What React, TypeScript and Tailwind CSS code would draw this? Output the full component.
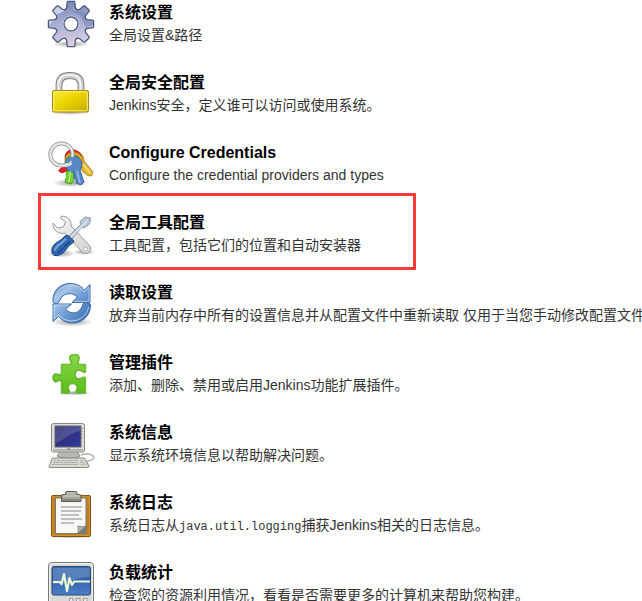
import type { ReactNode } from "react";

function gearPath() {
  const points: string[] = [];
  const add = (deg: number, r: number) => {
    const a = (deg * Math.PI) / 180;
    points.push(`${(24 + r * Math.sin(a)).toFixed(2)} ${(24 - r * Math.cos(a)).toFixed(2)}`);
  };
  for (let i = 0; i < 8; i++) {
    const c = i * 45;
    add(c - 15, 16.8);
    add(c - 10, 22);
    add(c - 8, 22.8);
    add(c + 8, 22.8);
    add(c + 10, 22);
    add(c + 15, 16.8);
    add(c + 22.5, 15.4);
  }
  return `M${points.join("L")}ZM24 17a7 7 0 1 0 0 14a7 7 0 1 0 0-14Z`;
}

function Icon({ children }: { children: ReactNode }) {
  return (
    <svg viewBox="0 0 48 48" className="size-12 shrink-0" aria-hidden="true">
      {children}
    </svg>
  );
}

function Shadow({ cx = 24, cy = 43, rx = 20, ry = 3 }: { cx?: number; cy?: number; rx?: number; ry?: number }) {
  return <ellipse cx={cx} cy={cy} rx={rx} ry={ry} fill="url(#shadow)" />;
}

function SharedGradients() {
  return (
    <svg className="absolute size-0" aria-hidden="true">
      <defs>
        <radialGradient id="shadow">
          <stop offset="0" stopColor="#000" stopOpacity=".4" />
          <stop offset="1" stopColor="#000" stopOpacity="0" />
        </radialGradient>
        <linearGradient id="metal" x1="0" y1="0" x2="1" y2="1">
          <stop offset="0" stopColor="#f4f4f3" />
          <stop offset="1" stopColor="#d3d5d1" />
        </linearGradient>
      </defs>
    </svg>
  );
}

function GearIcon() {
  const d = gearPath();
  return (
    <Icon>
      <defs>
        <linearGradient id="gear" x1="0" y1="0" x2="0.15" y2="1">
          <stop offset="0" stopColor="#7583b1" />
          <stop offset=".45" stopColor="#a0a9cf" />
          <stop offset="1" stopColor="#dccfe3" />
        </linearGradient>
        <clipPath id="gear-clip">
          <path d={d} clipRule="evenodd" />
        </clipPath>
      </defs>
      <Shadow cy={44} rx={19} ry={3.5} />
      <path d={d} fill="url(#gear)" fillRule="evenodd" />
      <g clipPath="url(#gear-clip)">
        <path d="M2 27C4 20 8 22 9 17C10 12 15 15 19 8L8 5L1 18Z" fill="#c9d3e6" />
        <path d="M25 12C34 9 40 9 47 24L39 28L33 15Z" fill="#7484b3" opacity=".55" />
      </g>
      <path d={d} fill="none" stroke="#4a5980" strokeWidth="1.3" strokeLinejoin="round" />
      <circle cx="24" cy="24" r="8.2" fill="none" stroke="#c5cde0" strokeWidth=".8" />
    </Icon>
  );
}

function LockIcon() {
  return (
    <Icon>
      <defs>
        <linearGradient id="lock" x1="0" y1="0" x2="1" y2="1">
          <stop offset="0" stopColor="#fbea3c" />
          <stop offset=".45" stopColor="#ecd400" />
          <stop offset="1" stopColor="#c4a900" />
        </linearGradient>
      </defs>
      <Shadow cx={23} cy={42} rx={21} />
      <path d="M12 23V15C12 8.500 16 5.500 23 5.500S34 8.500 34 15V23" fill="none" stroke="#7f827c" strokeWidth="6.800" />
      <path d="M12 23V15C12 8.500 16 5.500 23 5.500S34 8.500 34 15V23" fill="none" stroke="#cdcfca" strokeWidth="4.800" />
      <path d="M11.300 22V15C11.300 7.500 16 4.800 23 4.800S33.500 8.500 33.500 15V22" fill="none" stroke="#f2f2f0" strokeWidth="1.800" />
      <rect x="5.500" y="20.500" width="36" height="21.500" rx="1.500" fill="url(#lock)" stroke="#a58b14" />
      <rect x="6.700" y="21.700" width="33.600" height="19.100" rx="1" fill="none" stroke="#f8ee7c" strokeWidth="1" />
    </Icon>
  );
}

function KeysIcon() {
  return (
    <Icon>
      <Shadow cx={24} cy={43} rx={18} ry={4} />
      <g strokeWidth=".8" strokeLinejoin="round">
        <path d="M22 12C29 9 37 13 37 21L46 32L44.500 36L40.500 35.500L38 33L36 32L34 29L28 26Z" fill="#e2bb35" stroke="#a17d12" />
        <path d="M18 26L22 30L15 33L11.500 31L14 28Z" fill="#de2424" stroke="#a31a1a" />
        <path d="M18 18C18 10 25 8 30 11C34 13 35 17 35 20L20 26Z" fill="#dd3128" stroke="#a31a1a" />
        <path d="M18 20C19 12 27 11 32 14C36 17 36 21 35 24L20 27Z" fill="#eeb032" stroke="#b77a18" />
        <path d="M18 22C19 15 27 13 32 17L33 28L27 30L27 40L24 44L18 42L18.500 39L20 37L19 34L21 29C19 27 18 25 18 22Z" fill="#73d52f" stroke="#3f9212" />
        <path d="M18.500 23C19 16 29 14 33 19C36 23 35 28 33 30L37 42L34 45L29 43L29 40L27 38L27 32C22 33 18 29 18.500 23Z" fill="#5787c6" stroke="#2c5792" />
      </g>
      <path d="M30 31L33 43" stroke="#9bbde7" strokeWidth="1.500" />
      <path d="M23.500 31L22 42" stroke="#aeea80" strokeWidth="1.400" />
      <path d="M36 24L43 33" stroke="#f6df8e" strokeWidth="1.400" />
      <circle cx="14.500" cy="14.500" r="11.200" fill="none" stroke="#878a85" strokeWidth="3.800" />
      <circle cx="14.500" cy="14.500" r="11.200" fill="none" stroke="#e8e9e7" strokeWidth="2.300" />
      <path d="M20 23C21 20 24 18.500 28 18.500" fill="none" stroke="#5787c6" strokeWidth="3.500" />
      <path d="M18 26C20 26 22 25 24 24" fill="none" stroke="#dedfdd" strokeWidth="2.200" strokeLinecap="round" />
    </Icon>
  );
}

function ToolsIcon() {
  return (
    <Icon>
      <Shadow cx={14} cy={43.5} rx={14} ry={4} />
      <Shadow cx={37} cy={42} rx={11} ry={3} />
      <path
        d="M14 6.500C20 5 25 10 24 16L43 36C46 41 40 46 35 42L18 23C12 25 5 20 6 13L10.500 18L16.500 17L18.500 12L13.500 8Z"
        fill="url(#metal)"
        stroke="#989b96"
        strokeLinejoin="round"
      />
      <circle cx="38.500" cy="39" r="1.800" fill="#fff" stroke="#a3a5a1" strokeWidth=".8" />
      <path d="M22 26L33.500 14.500L33 11.500L38.500 7L43.500 8L42.500 14L37 18L34.500 17.500L25 29Z" fill="#bccad9" stroke="#8291a4" strokeWidth=".9" strokeLinejoin="round" />
      <path d="M24 27L36 15L41 10" stroke="#dce5ef" strokeWidth="1.300" fill="none" />
      <path d="M21 25.500L27 31C26 34 23 34 21 37C17 43 13 46 8 45.500C5 45 4 41 5.500 37C8 32 14 31 17 27C18 25.500 20 25 21 25.500Z" fill="#3268b0" stroke="#1c437f" />
      <path d="M18.500 29C15 34 9 35 8 40" stroke="#7ba6df" strokeWidth="2" fill="none" strokeLinecap="round" />
      <path d="M23 32C18 34 16 40 11 43" stroke="#1e4b8b" strokeWidth="1.500" fill="none" strokeLinecap="round" />
    </Icon>
  );
}

function ReloadIcon() {
  return (
    <Icon>
      <defs>
        <linearGradient id="reload-top" x1="0" y1="0" x2="1" y2="0.6">
          <stop offset="0" stopColor="#4f82c0" />
          <stop offset=".4" stopColor="#a6c4e6" />
          <stop offset="1" stopColor="#5c90cc" />
        </linearGradient>
        <linearGradient id="reload-bottom" x1="0" y1="0" x2="1" y2="0.4">
          <stop offset="0" stopColor="#a9c8ea" />
          <stop offset=".5" stopColor="#6d9dd3" />
          <stop offset="1" stopColor="#4478ba" />
        </linearGradient>
      </defs>
      <Shadow cx={25} cy={42} rx={21} ry={4.5} />
      <g stroke="#3d6ba8" strokeLinejoin="round">
        <path d="M6 22C5 11 13 3.500 23 3.500C30 3.500 34 6 37.500 10L43 4.500V22.500H25L30.500 17C24 11 15 13 12 22C11 24 6.500 24 6 22Z" fill="url(#reload-top)" />
        <path d="M43.500 25C43.500 36 35 43 26 43C19 43 15 40 11.500 36.500L6 41.500V24H24.500L18.500 29.500C25 35 33 34 36 24C37 22 43 22 43.500 25Z" fill="url(#reload-bottom)" />
      </g>
      <path d="M8 19C10 7 25 -1 37.500 11.500L42 7.500V21.500H27.500" fill="none" stroke="#c0d6ef" strokeWidth=".8" />
      <path d="M41.500 27C40 39 23 47 11.500 35L7 39V25H22" fill="none" stroke="#cfe1f5" strokeWidth=".8" />
    </Icon>
  );
}

function PuzzleIcon() {
  const d =
    "M14.500 14.500H23C25 14 24.500 12.500 23.500 11C21.500 7 23 4.500 27.500 4.500S33 7 31.500 11C30.500 12.500 30.500 14 32 14.500H38.500V21.500C37.500 23 36 22 34.500 21C31 19 28 21 28 24.500S31 30 34.500 28C36 27 38.500 26.500 38.500 28.500V43H30C28.500 42 29 40.500 30 39C31 35.500 29 33.500 25.500 33.500S20.500 36 21.500 39C22.500 41 23 42 22 43H14.500V32.500C14 30 12.500 30 11 31C8.500 33 6 31 6 27.500S8 23.500 11 24.500C13 25.500 14.500 25 14.500 23Z";
  return (
    <Icon>
      <defs>
        <linearGradient id="puzzle" x1="0" y1="0" x2="0" y2="1">
          <stop offset="0" stopColor="#8bd948" />
          <stop offset="1" stopColor="#5abb1d" />
        </linearGradient>
      </defs>
      <Shadow cx={27} cy={43} rx={17} ry={2.5} />
      <path d={d} fill="url(#puzzle)" stroke="#4aa316" strokeWidth="1.400" strokeLinejoin="round" />
      <path d={d} fill="none" stroke="#9be063" strokeWidth=".5" />
    </Icon>
  );
}

function ComputerIcon() {
  return (
    <Icon>
      <defs>
        <linearGradient id="screen" x1="0" y1="0" x2="1" y2="1">
          <stop offset="0" stopColor="#202063" />
          <stop offset=".5" stopColor="#2d3285" />
          <stop offset="1" stopColor="#343b9a" />
        </linearGradient>
      </defs>
      <Shadow cy={45} rx={23} ry={4} />
      <path d="M34 35C42 32 49 36 46 39C45 41 41 40 39 42" fill="none" stroke="#b7b9b4" strokeWidth="1.600" />
      <path d="M14 30H29L33 36C30 39 14 39 10 36Z" fill="#b7b9b3" stroke="#858780" />
      <rect x="4.500" y="3.500" width="33" height="28.500" rx="2" fill="#deded8" stroke="#878980" />
      <path d="M6 30H36" stroke="#b5b7af" strokeWidth="2" />
      <rect x="8" y="6" width="26" height="21" fill="url(#screen)" stroke="#646971" />
      <path d="M8.500 6.500H33.500V11C23 12 17 21 8.500 23Z" fill="#8589b5" opacity=".4" />
      <path d="M35.500 8V18" stroke="#999b93" strokeDasharray="1 2" />
      <path d="M20 29H23" stroke="#777" />
      <path d="M5.500 38H37.500L42 46.500Q42 47.500 41 47.500H3Q2 47.500 2 46.500Z" fill="#d9d9d3" stroke="#898b84" />
      <path d="M7 40.500H31M6 42.500H31M5 44.500H32" stroke="#a5a79f" strokeWidth="1.100" strokeDasharray="2 .7" />
      <path d="M33 40.500H37M33 42.500H38M34 44.500H39" stroke="#a5a79f" strokeWidth="1.100" strokeDasharray="1.200 .6" />
    </Icon>
  );
}

function ClipboardIcon() {
  return (
    <Icon>
      <Shadow cy={46} rx={22} ry={3} />
      <rect x="4.500" y="5.500" width="39" height="41" rx="1" fill="#c17d18" stroke="#805010" />
      <rect x="5.700" y="6.700" width="36.600" height="38.600" fill="none" stroke="#d0953a" />
      <path d="M8.500 8H39V43.500H8.500Z" fill="#f7f7f6" stroke="#777b78" />
      <path d="M39 35L30 43.500H39Z" fill="#777c76" />
      <path d="M30.500 43.500C32 41 31 39 31 36C34 37 37 37 39 36Z" fill="#b5b8b2" stroke="#777c76" strokeWidth=".8" />
      <path d="M14 17H35M14 21H34M14 25H32M14 29H35M14 33H27" stroke="#bfc1be" strokeWidth="1.800" />
      <path d="M14.500 11.500V6Q14.500 4.500 16 4.500H18.500V2.500Q18.500 1.500 20 1.500H28.500Q30 1.500 30 2.500V4.500H32.500Q34 4.500 34 6V11.500Z" fill="#a4a79d" stroke="#585d54" />
      <path d="M16 6H32.500M20 3H28.500" stroke="#d3d5cb" />
      <path d="M15 10H33.500" stroke="#7d8275" strokeWidth="1.500" />
    </Icon>
  );
}

function MonitorIcon() {
  return (
    <Icon>
      <defs>
        <linearGradient id="pulse" x1="0" y1="0" x2="0" y2="1">
          <stop offset="0" stopColor="#3d68ac" />
          <stop offset=".5" stopColor="#3564ad" />
          <stop offset="1" stopColor="#4c80c7" />
        </linearGradient>
      </defs>
      <path d="M1.500 48V6Q1.500 2.500 5 2.500H43Q46.500 2.500 46.500 6V48Z" fill="#d9dad7" stroke="#777a74" />
      <path d="M2.700 48V6Q2.700 3.700 5 3.700H43Q45.300 3.700 45.300 6V48" fill="none" stroke="#f3f3f2" />
      <rect x="5" y="6.500" width="38.500" height="28.500" rx="2" fill="url(#pulse)" stroke="#294777" />
      <path d="M6 8H42.500V17C30 16 20 25 6 24Z" fill="#a3bddf" opacity=".3" />
      <path d="M6 22H13L14.500 24L17 14L20 31L22.500 18L25 25L27 21.500H43" fill="none" stroke="#e8f9d4" strokeWidth="2.200" strokeLinejoin="round" />
      <path d="M22.500 43V38.500H26V43M29.500 43V38.500H33V43M36.500 43V38.500H40V43" fill="#efefee" stroke="#979994" />
    </Icon>
  );
}

type Item = { id: string; icon: ReactNode; title: string; description: ReactNode; highlighted?: boolean };

const items: Item[] = [
  { id: "configure", icon: <GearIcon />, title: "系统设置", description: "全局设置&路径" },
  { id: "security", icon: <LockIcon />, title: "全局安全配置", description: "Jenkins安全，定义谁可以访问或使用系统。" },
  { id: "credentials", icon: <KeysIcon />, title: "Configure Credentials", description: "Configure the credential providers and types" },
  { id: "tools", icon: <ToolsIcon />, title: "全局工具配置", description: "工具配置，包括它们的位置和自动安装器", highlighted: true },
  { id: "reload", icon: <ReloadIcon />, title: "读取设置", description: "放弃当前内存中所有的设置信息并从配置文件中重新读取 仅用于当您手动修改配置文件" },
  { id: "plugins", icon: <PuzzleIcon />, title: "管理插件", description: "添加、删除、禁用或启用Jenkins功能扩展插件。" },
  { id: "system-info", icon: <ComputerIcon />, title: "系统信息", description: "显示系统环境信息以帮助解决问题。" },
  {
    id: "log",
    icon: <ClipboardIcon />,
    title: "系统日志",
    description: (
      <>
        系统日志从<code className="font-['Liberation_Mono',monospace] text-[12px]">java.util.logging</code>捕获Jenkins相关的日志信息。
      </>
    ),
  },
  { id: "load", icon: <MonitorIcon />, title: "负载统计", description: "检查您的资源利用情况，看看是否需要更多的计算机来帮助您构建。" },
];

export default function App() {
  return (
    <main lang="zh-CN" className="overflow-x-hidden bg-white pl-[47px] font-['Liberation_Sans','Noto_Sans_CJK_SC',sans-serif]">
      <SharedGradients />
      <ul className="flex flex-col gap-[22px]">
        {items.map((item) => (
          <li key={item.id} className="relative">
            <a href={`#${item.id}`} className="flex h-12 gap-[14px] whitespace-nowrap">
              {item.icon}
              <span className="flex flex-col">
                <span className="text-[16px] leading-[26px] font-bold text-black">{item.title}</span>
                <span className="text-[14px] leading-[18px] text-[#333]">{item.description}</span>
              </span>
            </a>
            {item.highlighted && (
              <span className="pointer-events-none absolute -top-[17px] -left-[9px] h-[77px] w-[378px] border-3 border-[#f93a37]" />
            )}
          </li>
        ))}
      </ul>
    </main>
  );
}
